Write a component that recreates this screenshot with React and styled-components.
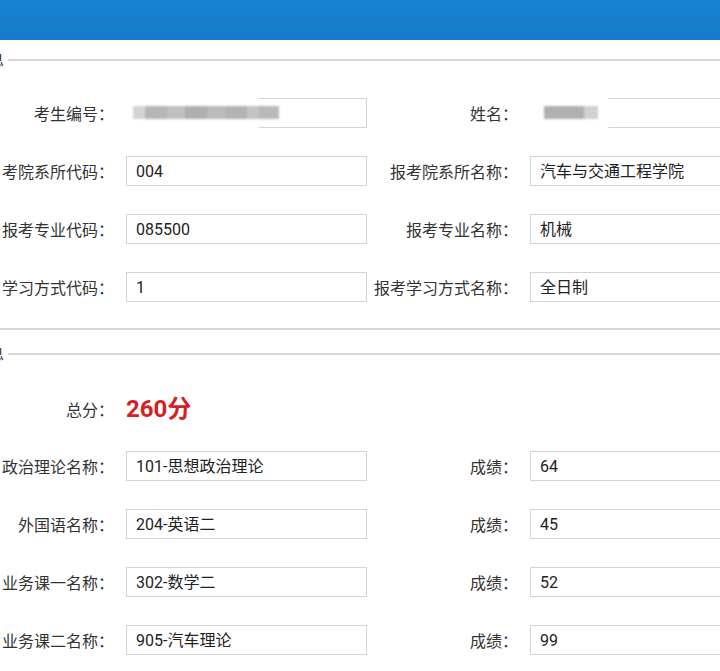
import React from "react";
import styled, { createGlobalStyle } from "styled-components";

const GlobalStyle = createGlobalStyle`
  html, body {
    margin: 0;
    padding: 0;
    background: #fff;
    overflow: hidden;
  }
  body {
    font-family: Roboto, "Noto Sans CJK SC", "Noto Sans", sans-serif;
    color: #333;
  }
`;

const Page = styled.div`
  width: 720px;
  height: 671px;
  overflow: hidden;
  position: relative;
  background: #fff;
`;

const Header = styled.div`
  height: 40px;
  background: linear-gradient(180deg, #1683d2 0%, #147bc9 100%);
`;

const Section = styled.fieldset`
  margin: ${(p) => p.$top}px 0 0 -100px;
  padding: 0 0 ${(p) => p.$bottom}px 0;
  width: 920px;
  box-sizing: border-box;
  min-width: 0;
  border: 2px solid #d6d6d6;
`;

const Legend = styled.legend`
  margin-left: 40px;
  padding: 0 4px 0 2px;
  font-size: 15px;
  line-height: 20px;
  color: #333;
`;

const Rows = styled.div`
  display: grid;
  row-gap: 28px;
  padding-top: ${(p) => p.$top}px;
`;

const Row = styled.div`
  display: flex;
  align-items: center;
  height: ${(p) => p.$h || 30}px;
`;

const Field = styled.div`
  display: flex;
  align-items: center;
`;

const Label = styled.div`
  width: ${(p) => p.$w}px;
  margin-right: 12px;
  text-align: right;
  white-space: nowrap;
  font-size: 16px;
  color: #333;
`;

const Box = styled.div`
  position: relative;
  width: 241px;
  height: 30px;
  box-sizing: border-box;
  border: 1px solid #d4d4d4;
  padding-left: 9px;
  font-size: 16px;
  line-height: 29px;
  color: #222;
  white-space: nowrap;
  background: #fff;
`;

const Total = styled.div`
  font-family: Roboto, "Noto Sans CJK SC", sans-serif;
  font-weight: 700;
  font-size: 24px;
  color: #d6201f;
  line-height: 28px;
`;

const Patch = styled.div`
  position: absolute;
  left: ${(p) => p.$left}px;
  top: -5px;
  width: ${(p) => p.$w}px;
  height: 40px;
  background: #fff;
  filter: blur(1px);
`;

const Mosaic = styled.div`
  position: absolute;
  left: ${(p) => p.$left}px;
  top: 7px;
  height: 13px;
  display: flex;
  filter: blur(1.2px);
`;

const Tile = styled.span`
  width: ${(p) => p.$w}px;
  height: 100%;
  background: ${(p) => p.$c};
`;

const Redact = ({ patchLeft, patchWidth, left, tiles }) => (
  <>
    <Patch $left={patchLeft} $w={patchWidth} />
    <Mosaic $left={left}>
      {tiles.map(([w, c], i) => (
        <Tile key={i} $w={w} $c={c} />
      ))}
    </Mosaic>
  </>
);

const LEFT_LABEL = 212;
const RIGHT_LABEL = 151;

const Pair = ({ l, lv, r, rv }) => (
  <Row>
    <Field>
      <Label $w={LEFT_LABEL}>{l}</Label>
      <Box>{lv}</Box>
    </Field>
    <Field>
      <Label $w={RIGHT_LABEL}>{r}</Label>
      <Box>{rv}</Box>
    </Field>
  </Row>
);

const info = [
  ["考院系所代码：", "004", "报考院系所名称：", "汽车与交通工程学院"],
  ["报考专业代码：", "085500", "报考专业名称：", "机械"],
  ["学习方式代码：", "1", "报考学习方式名称：", "全日制"],
];

const scores = [
  ["政治理论名称：", "101-思想政治理论", "64"],
  ["外国语名称：", "204-英语二", "45"],
  ["业务课一名称：", "302-数学二", "52"],
  ["业务课二名称：", "905-汽车理论", "99"],
];

export default function App() {
  return (
    <Page>
      <GlobalStyle />
      <Header />
      <Section $top={10} $bottom={26}>
        <Legend>考生信息</Legend>
        <Rows $top={28}>
          <Row>
            <Field>
              <Label $w={LEFT_LABEL}>考生编号：</Label>
              <Box>
                <Redact
                  patchLeft={-8}
                  patchWidth={140}
                  left={6}
                  tiles={[
                    [12, "#d4d4d4"],
                    [22, "#b5b5b5"],
                    [18, "#c0c0c0"],
                    [22, "#afafaf"],
                    [18, "#bbbbbb"],
                    [22, "#b3b3b3"],
                    [12, "#c4c4c4"],
                    [20, "#b9b9b9"],
                  ]}
                />
              </Box>
            </Field>
            <Field>
              <Label $w={RIGHT_LABEL}>姓名：</Label>
              <Box>
                <Redact
                  patchLeft={-3}
                  patchWidth={80}
                  left={13}
                  tiles={[
                    [40, "#b0b0b0"],
                    [14, "#d0d0d0"],
                  ]}
                />
              </Box>
            </Field>
          </Row>
          {info.map(([l, lv, r, rv]) => (
            <Pair key={l} l={l} lv={lv} r={r} rv={rv} />
          ))}
        </Rows>
      </Section>
      <Section $top={14} $bottom={40}>
        <Legend>成绩信息</Legend>
        <Rows $top={31}>
          <Row $h={28}>
            <Field>
              <Label $w={LEFT_LABEL}>总分：</Label>
              <Total>260分</Total>
            </Field>
          </Row>
          {scores.map(([l, lv, rv]) => (
            <Pair key={l} l={l} lv={lv} r="成绩：" rv={rv} />
          ))}
        </Rows>
      </Section>
    </Page>
  );
}
